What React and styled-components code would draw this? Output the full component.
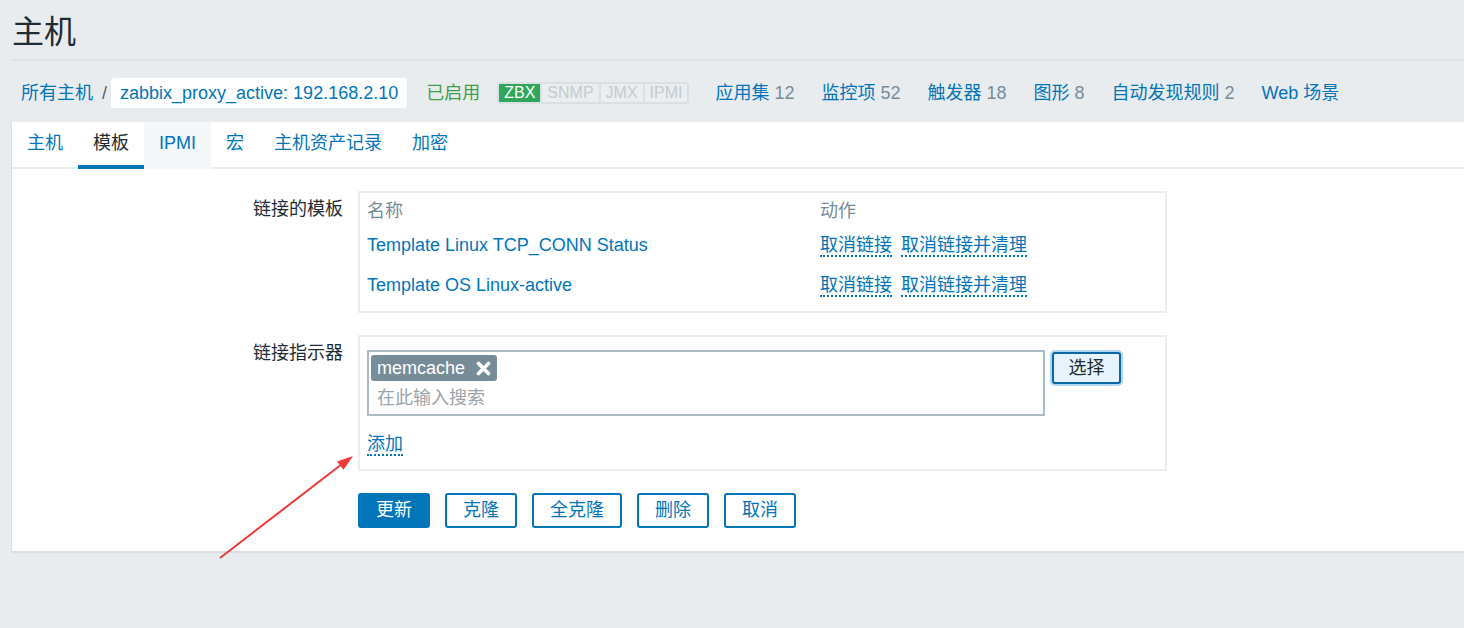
import React from 'react'
import styled, { createGlobalStyle } from 'styled-components'

const GlobalStyle = createGlobalStyle`
  html, body {
    margin: 0;
    padding: 0;
    background: #e9ecef;
  }
  body {
    font-family: "Liberation Sans", Arial, "Noto Sans CJK SC", sans-serif;
    font-size: 18px;
    color: #1f2c33;
  }
  * { box-sizing: border-box; }
`

const tabs = ['主机', '模板', 'IPMI', '宏', '主机资产记录', '加密']

const navLinks = [
    { title: '应用集', count: 12 },
    { title: '监控项', count: 52 },
    { title: '触发器', count: 18 },
    { title: '图形', count: 8 },
    { title: '自动发现规则', count: 2 },
    { title: 'Web 场景' },
]

const templates = ['Template Linux TCP_CONN Status', 'Template OS Linux-active']

function CloseIcon() {
    return (
        <svg width="15" height="15" viewBox="0 0 15 15">
            <path d="M2.5 2.5 L12.5 12.5 M12.5 2.5 L2.5 12.5" stroke="#fff" strokeWidth="3.6" strokeLinecap="round" />
        </svg>
    )
}

function Arrow() {
    // red annotation arrow pointing at the "添加" link
    return (
        <ArrowSvg width="145" height="115" viewBox="215 450 145 115">
            <line x1="220" y1="558" x2="342" y2="464" stroke="#f03a3a" strokeWidth="2" />
            <polygon points="353,456 343.5,469.8 337,461.5" fill="#f03a3a" />
        </ArrowSvg>
    )
}

export default function App() {
    return (
        <Page>
            <GlobalStyle />
            <Header>
                <Title>主机</Title>
            </Header>

            <Breadcrumbs>
                <Crumb>所有主机</Crumb>
                <Slash>/</Slash>
                <HostBox>zabbix_proxy_active: 192.168.2.10</HostBox>
                <Status>已启用</Status>
                <Availability>
                    <AvailItem active>ZBX</AvailItem>
                    <AvailItem>SNMP</AvailItem>
                    <AvailItem>JMX</AvailItem>
                    <AvailItem>IPMI</AvailItem>
                </Availability>
                <NavLinks>
                    {navLinks.map((l) => (
                        <NavLink key={l.title}>
                            {l.title}
                            {l.count !== undefined && <Count>{l.count}</Count>}
                        </NavLink>
                    ))}
                </NavLinks>
            </Breadcrumbs>

            <Panel>
                <TabList>
                    {tabs.map((t) => (
                        <Tab key={t} active={t === '模板'} hover={t === 'IPMI'}>{t}</Tab>
                    ))}
                </TabList>

                <Form>
                    <FormRow>
                        <Label>链接的模板</Label>
                        <Box>
                            <TemplateTable>
                                <HeadCell>名称</HeadCell>
                                <HeadCell>动作</HeadCell>
                                {templates.map((t) => (
                                    <React.Fragment key={t}>
                                        <Cell><NameLink>{t}</NameLink></Cell>
                                        <Cell>
                                            <ActionLink>取消链接</ActionLink>
                                            <ActionLink>取消链接并清理</ActionLink>
                                        </Cell>
                                    </React.Fragment>
                                ))}
                            </TemplateTable>
                        </Box>
                    </FormRow>

                    <FormRow>
                        <Label>链接指示器</Label>
                        <Box pad>
                            <SelectLine>
                                <MultiSelect>
                                    <Tag>
                                        memcache
                                        <TagClose><CloseIcon /></TagClose>
                                    </Tag>
                                    <Placeholder>在此输入搜索</Placeholder>
                                </MultiSelect>
                                <SelectButton>选择</SelectButton>
                            </SelectLine>
                            <AddRow>
                                <ActionLink>添加</ActionLink>
                            </AddRow>
                        </Box>
                    </FormRow>

                    <FormRow>
                        <span />
                        <Buttons>
                            <Button primary>更新</Button>
                            <Button>克隆</Button>
                            <Button>全克隆</Button>
                            <Button>删除</Button>
                            <Button>取消</Button>
                        </Buttons>
                    </FormRow>
                </Form>
            </Panel>

            <Arrow />
        </Page>
    )
}

const Page = styled.div`
    position: relative;
    width: 1464px;
    min-height: 628px;
    overflow: hidden;
`;

const Header = styled.div`
    margin-left: 12px;
    padding: 13px 0 8px;
    border-bottom: 2px solid #dde1e5;
`;

const Title = styled.h1`
    margin: 0;
    font-size: 32px;
    font-weight: normal;
    line-height: 38px;
    color: #1f2c33;
`;

const Breadcrumbs = styled.div`
    display: flex;
    align-items: center;
    height: 61px;
    padding: 17px 0 14px 21px;
    white-space: nowrap;
`;

const Crumb = styled.span`
    color: #0275b8;
    line-height: 30px;
`;

const Slash = styled.span`
    color: #4f5f68;
    margin: 0 4px 0 9px;
    line-height: 30px;
`;

const HostBox = styled.span`
    background: #fff;
    border-radius: 3px;
    height: 30px;
    line-height: 30px;
    padding: 0 9px;
    color: #0275b8;
`;

const Status = styled.span`
    color: #429e47;
    margin-left: 19px;
    line-height: 30px;
`;

const Availability = styled.div`
    display: flex;
    margin-left: 17px;
    border: 2px solid #d9dfe2;
    border-radius: 3px;
    overflow: hidden;
    height: 22px;
`;

const AvailItem = styled.span`
    font-size: 16px;
    line-height: 18px;
    padding: 0 5px;
    color: ${(p) => (p.active ? '#fff' : '#c3cbcf')};
    background: ${(p) => (p.active ? '#2fa65c' : '#ebeef0')};
    & + & {
        border-left: 2px solid #d9dfe2;
    }
`;

const NavLinks = styled.div`
    display: flex;
    gap: 27px;
    margin-left: 26px;
`;

const NavLink = styled.span`
    color: #0275b8;
    line-height: 30px;
`;

const Count = styled.span`
    color: #768d99;
    margin-left: 5px;
`;

const Panel = styled.div`
    margin-left: 11px;
    background: #fff;
    border-left: 1px solid #dbe0e3;
    border-bottom: 2px solid #dbe0e3;
`;

const TabList = styled.div`
    display: flex;
    height: 47px;
    border-bottom: 2px solid #ebeef0;
`;

const Tab = styled.div`
    height: 47px;
    line-height: 43px;
    padding: 0 15px;
    border-bottom: 4px solid ${(p) => (p.active ? '#0275b8' : 'transparent')};
    background: ${(p) => (p.hover ? '#f4f8fb' : 'transparent')};
    color: ${(p) => (p.active ? '#1f2c33' : '#0275b8')};
`;

const Form = styled.div`
    padding: 22px 0 23px;
`;

const FormRow = styled.div`
    display: grid;
    grid-template-columns: 331px 809px;
    column-gap: 15px;
    margin-bottom: 22px;
    &:last-child {
        margin-bottom: 0;
    }
`;

const Label = styled.div`
    text-align: right;
    padding-top: 8px;
    line-height: 20px;
    color: #1f2c33;
`;

const Box = styled.div`
    border: 2px solid #ebeef0;
    padding: ${(p) => (p.pad ? '13px 7px 13px' : '4px 7px 6px')};
`;

const TemplateTable = styled.div`
    display: grid;
    grid-template-columns: 453px 1fr;
`;

const HeadCell = styled.div`
    height: 28px;
    line-height: 28px;
    color: #768d99;
`;

const Cell = styled.div`
    height: 40px;
    display: flex;
    align-items: center;
`;

const NameLink = styled.span`
    color: #0275b8;
    line-height: 20px;
`;

const ActionLink = styled.span`
    display: inline-block;
    color: #0275b8;
    line-height: 20px;
    border-bottom: 2px dotted #0275b8;
    margin-top: 2px;
    margin-right: 9px;
`;

const SelectLine = styled.div`
    display: flex;
    align-items: flex-start;
`;

const MultiSelect = styled.div`
    width: 678px;
    height: 66px;
    border: 2px solid #acbbc2;
    padding: 3px 2px 0;
`;

const Tag = styled.span`
    display: inline-flex;
    align-items: center;
    height: 26px;
    padding: 0 6px;
    border-radius: 3px;
    background: #768d99;
    color: #fff;
    line-height: 26px;
`;

const TagClose = styled.span`
    display: flex;
    margin-left: 11px;
`;

const Placeholder = styled.div`
    margin-top: 7px;
    padding-left: 6px;
    line-height: 20px;
    color: #9aa5aa;
`;

const SelectButton = styled.button`
    margin: 2px 0 0 7px;
    width: 69px;
    height: 32px;
    border: 2px solid #0b66a6;
    border-radius: 3px;
    background: #e6f3fc;
    box-shadow: 0 0 0 2px #b3d7f1;
    font: inherit;
    line-height: 26px;
    color: #1f2c33;
    padding: 0;
`;

const AddRow = styled.div`
    margin-top: 16px;
`;

const Buttons = styled.div`
    display: flex;
    gap: 15px;
`;

const Button = styled.button`
    height: 35px;
    padding: 0 16px;
    border: 2px solid #0275b8;
    border-radius: 3px;
    font: inherit;
    line-height: 29px;
    background: ${(p) => (p.primary ? '#0275b8' : '#fff')};
    color: ${(p) => (p.primary ? '#fff' : '#0275b8')};
`;

const ArrowSvg = styled.svg`
    position: absolute;
    left: 215px;
    top: 450px;
    pointer-events: none;
`;
